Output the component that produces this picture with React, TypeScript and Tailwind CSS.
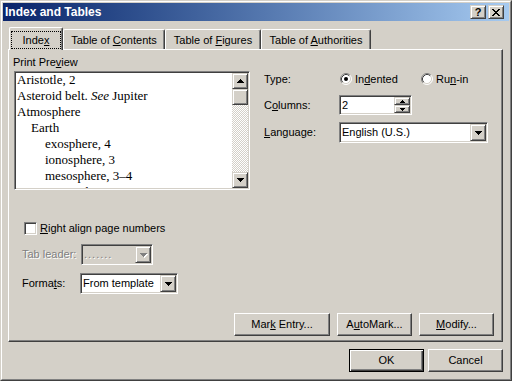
import React from 'react';

const raised =
  "bg-[#d4d0c8] border border-t-white border-l-white border-r-[#404040] border-b-[#404040] shadow-[inset_-1px_-1px_0_#808080]";
const raised2 =
  "bg-[#d4d0c8] border border-t-[#d4d0c8] border-l-[#d4d0c8] border-r-[#404040] border-b-[#404040] shadow-[inset_1px_1px_0_#ffffff,inset_-1px_-1px_0_#808080]";
const sunken =
  "border border-t-[#808080] border-l-[#808080] border-r-white border-b-white shadow-[inset_1px_1px_0_#404040,inset_-1px_-1px_0_#d4d0c8]";

function U({ children }: { children: React.ReactNode }) {
  return <span className="underline decoration-1 underline-offset-1">{children}</span>;
}

function Down({ color = '#000', size = 7 }: { color?: string; size?: number }) {
  const rows = Math.ceil(size / 2);
  return (
    <svg width={size} height={rows} shapeRendering="crispEdges">
      {Array.from({ length: rows }, (_, i) => (
        <rect key={i} x={i} y={i} width={size - 2 * i} height={1} fill={color} />
      ))}
    </svg>
  );
}

function Up({ color = '#000', size = 7 }: { color?: string; size?: number }) {
  const rows = Math.ceil(size / 2);
  return (
    <svg width={size} height={rows} shapeRendering="crispEdges">
      {Array.from({ length: rows }, (_, i) => (
        <rect key={i} x={i} y={rows - 1 - i} width={size - 2 * i} height={1} fill={color} />
      ))}
    </svg>
  );
}

function Radio({ checked }: { checked?: boolean }) {
  return (
    <svg width="12" height="12" viewBox="0 0 12 12">
      <circle cx="6" cy="6" r="5" fill="#fff" />
      <path d="M2.11 9.89 A5.5 5.5 0 0 1 9.89 2.11" stroke="#808080" fill="none" />
      <path d="M9.89 2.11 A5.5 5.5 0 0 1 2.11 9.89" stroke="#ffffff" fill="none" />
      <path d="M2.82 9.18 A4.5 4.5 0 0 1 9.18 2.82" stroke="#404040" fill="none" />
      <path d="M9.18 2.82 A4.5 4.5 0 0 1 2.82 9.18" stroke="#d4d0c8" fill="none" />
      {checked && <circle cx="6" cy="6" r="2" fill="#000" />}
    </svg>
  );
}

function PushButton({ className, children, isDefault }: { className: string; children: React.ReactNode; isDefault?: boolean }) {
  if (isDefault) {
    return (
      <div
        className={`${className} h-[23px] bg-[#d4d0c8] border border-black shadow-[inset_1px_1px_0_#ffffff,inset_-1px_-1px_0_#404040,inset_-2px_-2px_0_#808080] flex items-center justify-center`}
      >
        <span>{children}</span>
      </div>
    );
  }
  return (
    <div className={`${className} h-[23px] ${raised} flex items-center justify-center`}>
      <span>{children}</span>
    </div>
  );
}

function ArrowBtn({ disabled }: { disabled?: boolean }) {
  return (
    <div className={`w-[16px] h-full ${raised2} flex items-center justify-center`}>
      {disabled ? (
        <div className="relative">
          <div className="absolute left-[1px] top-[1px]">
            <Down color="#ffffff" />
          </div>
          <div className="relative">
            <Down color="#808080" />
          </div>
        </div>
      ) : (
        <Down />
      )}
    </div>
  );
}

const lines: { indent: number; content: React.ReactNode }[] = [
  { indent: 0, content: 'Aristotle, 2' },
  {
    indent: 0,
    content: (
      <>
        Asteroid belt. <i>See</i> Jupiter
      </>
    ),
  },
  { indent: 0, content: 'Atmosphere' },
  { indent: 1, content: 'Earth' },
  { indent: 2, content: 'exosphere, 4' },
  { indent: 2, content: 'ionosphere, 3' },
  { indent: 2, content: 'mesosphere, 3\u20134' },
  { indent: 2, content: 'stratosphere, 3' },
];

export default function App() {
  return (
    <div className="w-[512px] h-[381px] bg-[#d4d0c8] font-['Liberation_Sans',Arial,sans-serif] text-[11px] leading-[13px] text-black border border-t-[#d4d0c8] border-l-[#d4d0c8] border-r-[#404040] border-b-[#404040] overflow-hidden select-none">
      <div className="h-full border border-t-white border-l-white border-r-[#808080] border-b-[#808080] p-[1px] flex flex-col">
        {/* Title bar */}
        <div className="h-[18px] shrink-0 flex items-center bg-linear-to-r from-[#0a246a] to-[#a6caf0] pl-[2px] pr-[5px]">
          <span className="flex-1 font-bold text-white text-[12px]">Index and Tables</span>
          <div className="flex gap-[2px]">
            <div className={`w-[16px] h-[14px] ${raised2} flex items-center justify-center font-bold text-[11px] leading-[11px]`}>?</div>
            <div className={`w-[16px] h-[14px] ${raised2} flex items-center justify-center`}>
              <svg width="8" height="7" viewBox="0 0 8 7" shapeRendering="crispEdges">
                <path d="M0 0h2v1h-2zM6 0h2v1h-2zM1 1h2v1h-2zM5 1h2v1h-2zM2 2h4v1h-4zM3 3h2v1h-2zM2 4h4v1h-4zM1 5h2v1h-2zM5 5h2v1h-2zM0 6h2v1h-2zM6 6h2v1h-2z" fill="#000" />
              </svg>
            </div>
          </div>
        </div>

        {/* Body */}
        <div className="flex-1 flex flex-col pl-[5px] pr-[6px] pt-[6px]">
          {/* Tabs */}
          <div className="h-[22px] flex items-end relative z-10">
            <div className="ml-[1px] w-[54px] h-[23px] -mb-[1px] bg-[#d4d0c8] border-t border-l border-r border-t-white border-l-white border-r-[#404040] shadow-[inset_-1px_0_0_#808080] rounded-t-[2px] pt-[3px] pl-[1px] pr-[1px]">
              <div className="h-[18px] border border-dotted border-black flex items-center justify-center pt-[1px]">
                <span>
                  Inde<U>x</U>
                </span>
              </div>
            </div>
            <div className="w-[102px] h-[20px] border-t border-l border-r border-t-white border-l-white border-r-[#404040] shadow-[inset_-1px_0_0_#808080] rounded-t-[2px] flex items-center justify-center pt-[2px]">
              <span>
                Table of <U>C</U>ontents
              </span>
            </div>
            <div className="w-[96px] h-[20px] border-t border-l border-r border-t-white border-l-white border-r-[#404040] shadow-[inset_-1px_0_0_#808080] rounded-t-[2px] flex items-center justify-center pt-[2px]">
              <span>
                Table of <U>F</U>igures
              </span>
            </div>
            <div className="w-[110px] h-[20px] border-t border-l border-r border-t-white border-l-white border-r-[#404040] shadow-[inset_-1px_0_0_#808080] rounded-t-[2px] flex items-center justify-center pt-[2px]">
              <span>
                Table of <U>A</U>uthorities
              </span>
            </div>
          </div>

          {/* Panel */}
          <div className="h-[293px] flex flex-col border border-t-white border-l-white border-r-[#404040] border-b-[#404040] shadow-[inset_-1px_-1px_0_#808080] pt-[6px] pl-[4px] pr-[8px] pb-[5px]">
            <div className="flex">
              {/* Left column */}
              <div className="w-[237px] flex flex-col">
                <div className="h-[13px]">
                  Print Pre<U>v</U>iew
                </div>
                <div className={`mt-[2px] ml-[1px] w-[236px] h-[119px] bg-white ${sunken} p-[1px] flex`}>
                  <div className="flex-1 overflow-hidden pl-[1px] -mt-[1px] font-['Liberation_Serif','Times_New_Roman',serif] text-[13px] leading-[16px]">
                    {lines.map((l, i) => (
                      <div
                        key={i}
                        className={`whitespace-nowrap ${l.indent === 0 ? '' : l.indent === 1 ? 'pl-[14px]' : 'pl-[28px]'}`}
                      >
                        {l.content}
                      </div>
                    ))}
                  </div>
                  <div className="w-[16px] flex flex-col bg-[repeating-conic-gradient(#ffffff_0_25%,#d4d0c8_0_50%)] bg-[length:2px_2px]">
                    <div className={`h-[16px] ${raised2} flex items-center justify-center`}>
                      <Up />
                    </div>
                    <div className={`h-[16px] ${raised2}`} />
                    <div className="flex-1" />
                    <div className={`h-[16px] ${raised2} flex items-center justify-center`}>
                      <Down />
                    </div>
                  </div>
                </div>
              </div>

              {/* Right column */}
              <div className="ml-[14px] pt-[16px] flex flex-col">
                <div className="h-[14px] flex items-center">
                  <div className="w-[76px]">Type:</div>
                  <div className="w-[81px] flex items-center">
                    <Radio checked />
                    <span className="ml-[3px]">
                      In<U>d</U>ented
                    </span>
                  </div>
                  <div className="flex items-center">
                    <Radio />
                    <span className="ml-[3px]">
                      Ru<U>n</U>-in
                    </span>
                  </div>
                </div>
                <div className="mt-[9px] h-[20px] flex items-center">
                  <div className="w-[75px]">
                    C<U>o</U>lumns:
                  </div>
                  <div className={`w-[73px] h-[20px] bg-white ${sunken} p-[1px] flex`}>
                    <div className="flex-1 flex items-center pl-[1px]">2</div>
                    <div className="w-[16px] flex flex-col">
                      <div className={`h-[8px] ${raised2} flex items-center justify-center`}>
                        <Up size={5} />
                      </div>
                      <div className={`h-[8px] ${raised2} flex items-center justify-center`}>
                        <Down size={5} />
                      </div>
                    </div>
                  </div>
                </div>
                <div className="mt-[7px] h-[21px] flex items-center">
                  <div className="w-[75px]">
                    <U>L</U>anguage:
                  </div>
                  <div className={`w-[149px] h-[21px] bg-white ${sunken} p-[1px] flex`}>
                    <div className="flex-1 flex items-center pl-[1px]">English (U.S.)</div>
                    <ArrowBtn />
                  </div>
                </div>
              </div>
            </div>

            {/* Checkbox row */}
            <div className="mt-[32px] ml-[11px] h-[13px] flex items-center">
              <div className={`w-[13px] h-[13px] bg-white ${sunken}`} />
              <span className="ml-[3px]">
                <U>R</U>ight align page numbers
              </span>
            </div>

            {/* Tab leader */}
            <div className="mt-[9px] ml-[9px] h-[21px] flex items-center">
              <div className="w-[59px] text-[#808080] [text-shadow:1px_1px_0_#ffffff]">Tab leader:</div>
              <div className={`w-[72px] h-[21px] bg-[#d4d0c8] ${sunken} p-[1px] flex`}>
                <div className="flex-1 flex items-center pl-[1px] text-[#808080] [text-shadow:1px_1px_0_#ffffff] tracking-[1px]">
                  .......
                </div>
                <ArrowBtn disabled />
              </div>
            </div>

            {/* Formats */}
            <div className="mt-[8px] ml-[9px] h-[21px] flex items-center">
              <div className="w-[58px]">
                Forma<U>t</U>s:
              </div>
              <div className={`w-[98px] h-[21px] bg-white ${sunken} p-[1px] flex`}>
                <div className="flex-1 flex items-center pl-[1px]">From template</div>
                <ArrowBtn />
              </div>
            </div>

            {/* Buttons */}
            <div className="mt-auto flex justify-end gap-[7px]">
              <PushButton className="w-[96px]">
                Mar<U>k</U> Entry...
              </PushButton>
              <PushButton className="w-[75px]">
                A<U>u</U>toMark...
              </PushButton>
              <PushButton className="w-[75px]">
                <U>M</U>odify...
              </PushButton>
            </div>
          </div>

          {/* OK / Cancel */}
          <div className="mt-[7px] flex justify-end gap-[4px]">
            <PushButton className="w-[75px]" isDefault>
              OK
            </PushButton>
            <PushButton className="w-[75px]">Cancel</PushButton>
          </div>
        </div>
      </div>
    </div>
  );
}
